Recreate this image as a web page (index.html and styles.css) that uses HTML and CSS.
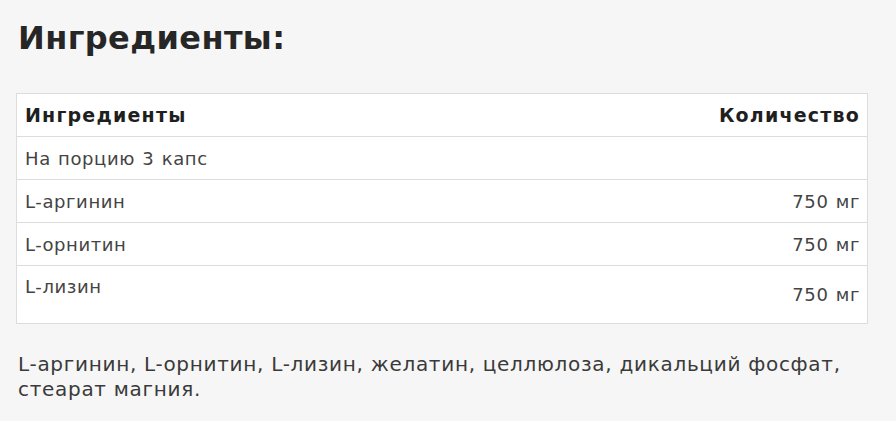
FILE: index.html
```html
<!DOCTYPE html>
<html lang="ru">
<head>
<meta charset="utf-8">
<link rel="stylesheet" href="styles.css">
</head>
<body>
<div class="page">
  <h2 class="title">Ингредиенты:</h2>
  <table class="ing">
    <thead>
      <tr><th class="l">Ингредиенты</th><th class="r">Количество</th></tr>
    </thead>
    <tbody>
      <tr><td class="l">На порцию 3 капс</td><td class="r"></td></tr>
      <tr><td class="l">L-аргинин</td><td class="r">750 мг</td></tr>
      <tr><td class="l">L-орнитин</td><td class="r">750 мг</td></tr>
      <tr class="last"><td class="l">L-лизин</td><td class="r">750 мг</td></tr>
    </tbody>
  </table>
  <p class="note">L-аргинин, L-орнитин, L-лизин, желатин, целлюлоза, дикальций фосфат,<br>стеарат магния.</p>
</div>
</body>
</html>
```

FILE: styles.css
```css
html, body {
  margin: 0;
  padding: 0;
  background: #f6f6f6;
}
.page {
  padding: 0 28px 0 16px;
  font-family: "DejaVu Sans", "Noto Sans", sans-serif;
  color: #333;
}
.title {
  margin: 0;
  padding: 18px 0 0 2px;
  height: 75px;
  box-sizing: border-box;
  font-size: 32px;
  line-height: 40px;
  font-weight: 700;
  letter-spacing: 0.4px;
  color: #262626;
}
.ing {
  width: 852px;
  border-collapse: collapse;
  background: #fff;
  border: 1px solid #dcdcdc;
  margin-top: 18px;
}
.ing th, .ing td {
  height: 42px;
  padding: 0 7px 0 8px;
  border-bottom: 1px solid #dcdcdc;
  font-size: 18px;
}
.ing th {
  font-size: 19px;
  font-weight: 700;
  color: #1f1f1f;
  letter-spacing: 1.2px;
}
.ing td {
  color: #444;
  letter-spacing: 0.6px;
  word-spacing: 1px;
}
.ing .l { text-align: left; }
.ing .r { text-align: right; }
.ing tr.last td { height: 57px; }
.ing tr.last td.l { vertical-align: top; line-height: 42px; }
.ing tr.last td.r { vertical-align: middle; }
.note {
  margin: 28px 0 0 2px;
  font-size: 20px;
  line-height: 25px;
  letter-spacing: 0.7px;
  color: #3a3a3a;
}
```
